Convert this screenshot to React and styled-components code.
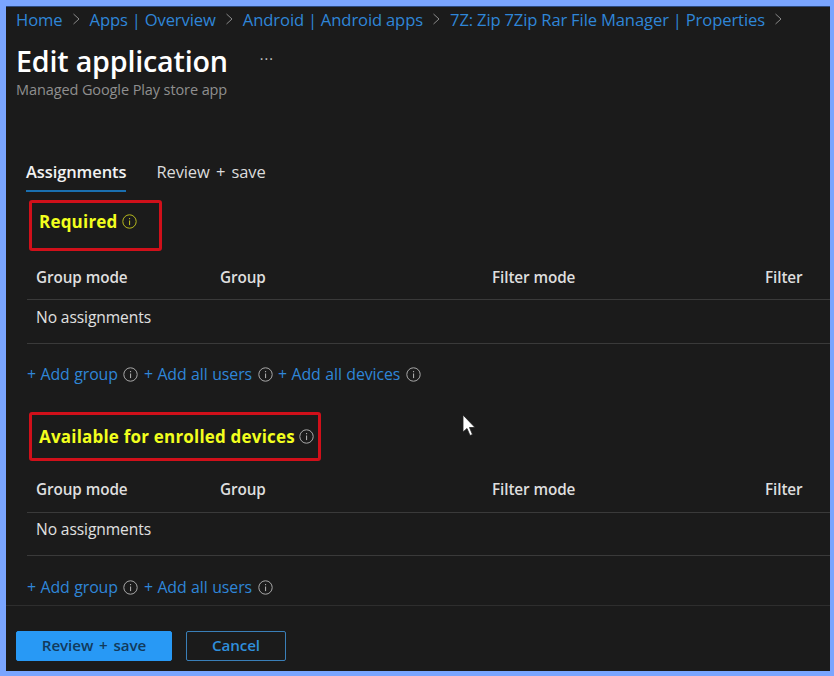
import React from "react";
import styled, { createGlobalStyle } from "styled-components";

const Global = createGlobalStyle`
  html, body { margin: 0; padding: 0; background: #7aa5ff; }
  body { font-family: "Open Sans", "Noto Sans", "Liberation Sans", sans-serif; }
`;

const Frame = styled.div`
  width: 834px; height: 676px; box-sizing: border-box;
  padding: 6px 4px 5px 6px; background: #7aa5ff; overflow: hidden;
`;
const Panel = styled.main`
  position: relative; height: 100%; box-sizing: border-box;
  background: #1b1b1b; display: flex; flex-direction: column;
  border-top: 1px solid #2b4a80;
`;
const Breadcrumbs = styled.nav`
  display: flex; align-items: center; height: 24px; padding: 0 0 2px 10px; gap: 9px;
  font-size: 16.6px; color: #2f86d8; white-space: nowrap;
`;
const Crumb = styled.span`letter-spacing: -0.1px; word-spacing: -0.3px;`;
const TitleRow = styled.div`
  display: flex; align-items: center; gap: 32px; padding: 8px 0 0 10px; height: 40px;
`;
const Title = styled.h1`
  margin: 0; font-size: 28.7px; font-weight: 600; color: #fff; letter-spacing: -0.2px; line-height: 40px;
`;
const More = styled.span`color: #c8c8c8; font-size: 14px; letter-spacing: 1px; line-height: 14px; margin-bottom: 4px;`;
const Subtitle = styled.div`
  padding: 0 0 0 10px; margin-top: -1px; font-size: 14.5px; line-height: 20px; color: #8f8f8f; letter-spacing: -0.1px;
`;
const Tabs = styled.div`
  display: flex; gap: 30px; margin: 56px 0 0 20px; height: 37px;
`;
const Tab = styled.div`
  font-size: 16.5px; line-height: 24px; padding-top: 4px; height: 30px; letter-spacing: -0.1px; word-spacing: 2px;
  color: ${p => (p.$active ? "#f2f2f2" : "#dcdcdc")};
  font-weight: ${p => (p.$active ? 600 : 400)};
  ${p => p.$active && "border-bottom: 2px solid #1a6fb0;"}
`;
const Marked = styled.div`
  align-self: flex-start; box-sizing: border-box; display: flex; align-items: center; gap: 4px;
  height: ${p => p.$h}px; width: ${p => p.$w}px; margin: ${p => p.$m};
  padding: 0 0 ${p => p.$pb}px 7px; border: 3px solid #d0101a; border-radius: 3px;
`;
const Heading = styled.h2`
  margin: 0; font-size: 17px; font-weight: 700; color: #f2ff1e; line-height: 20px; letter-spacing: 0.2px; white-space: nowrap;
`;
const Row = styled.div`
  display: grid; grid-template-columns: 184px 272px 273px 1fr; margin-left: 21px;
  align-items: center; padding: ${p => p.$pad}; box-sizing: border-box;
  height: ${p => p.$h}px; border-bottom: 1px solid #3a3a3a;
  font-size: 15.6px; color: #e0e0e0; letter-spacing: -0.1px;
`;
const Head = styled.span`font-weight: 600; font-size: 15.3px; color: #dedede; white-space: nowrap;`;
const Links = styled.div`
  display: flex; align-items: center; gap: 5.5px; margin: ${p => p.$m}; padding-left: 21px; height: 22px;
`;
const Link = styled.span`font-size: 15.9px; word-spacing: 0.5px; color: #2f86d8; letter-spacing: -0.1px; white-space: nowrap;`;
const Footer = styled.footer`
  margin-top: auto; height: 66px; box-sizing: border-box; border-top: 1px solid #2e2e2e;
  display: flex; gap: 14px; padding: 25px 0 0 10px;
`;
const Button = styled.button`
  height: 30px; box-sizing: border-box; border-radius: 2px; font-family: inherit; font-size: 15.2px; font-weight: 600;
  width: ${p => p.$w}px; padding: 0 0 3px; letter-spacing: -0.1px; word-spacing: 2px;
  background: ${p => (p.$primary ? "#2899f5" : "transparent")};
  color: ${p => (p.$primary ? "#123a5c" : "#2f8fdc")};
  border: 1px solid ${p => (p.$primary ? "#2899f5" : "#3a7fb8")};
`;
const Pointer = styled.svg`position: absolute; left: 456px; top: 407px;`;

const Info = ({ color = "#a8a8a8" }) => (
  <svg width="15" height="15" viewBox="0 0 15 15" fill="none" style={{ flex: "none" }}>
    <circle cx="7.5" cy="7.5" r="6.7" stroke={color} strokeWidth="1" />
    <rect x="7" y="6.5" width="1.1" height="4.6" fill={color} />
    <rect x="7" y="4" width="1.1" height="1.2" fill={color} />
  </svg>
);

const Chevron = () => (
  <svg width="9" height="12" viewBox="0 0 9 12" fill="none" style={{ flex: "none" }}>
    <path d="M1.5 1 L7 6 L1.5 11" stroke="#8a8a8a" strokeWidth="1" />
  </svg>
);

const crumbs = ["Home", "Apps | Overview", "Android | Android apps", "7Z: Zip 7Zip Rar File Manager | Properties"];

const Table = ({ headH, rowH }) => (
  <>
    <Row $h={headH} $pad="4px 0 0 9px">
      <Head>Group mode</Head><Head>Group</Head><Head>Filter mode</Head><Head>Filter</Head>
    </Row>
    <Row $h={rowH} $pad="0 0 10px 9px"><span>No assignments</span></Row>
  </>
);

export default function App() {
  return (
    <Frame>
      <Global />
      <Panel>
        <Breadcrumbs>
          {crumbs.map(c => (
            <React.Fragment key={c}>
              <Crumb>{c}</Crumb>
              <Chevron />
            </React.Fragment>
          ))}
        </Breadcrumbs>
        <TitleRow>
          <Title>Edit application</Title>
          <More>···</More>
        </TitleRow>
        <Subtitle>Managed Google Play store app</Subtitle>
        <Tabs>
          <Tab $active>Assignments</Tab>
          <Tab>Review + save</Tab>
        </Tabs>
        <Marked $w={133} $h={51} $m="7px 0 0 23px" $pb={8}>
          <Heading>Required</Heading>
          <Info color="#b5b81e" />
        </Marked>
        <Table headH={49} rowH={44} />
        <Links $m="19px 0 0 0">
          <Link>+ Add group</Link><Info />
          <Link>+ Add all users</Link><Info />
          <Link>+ Add all devices</Link><Info />
        </Links>
        <Marked $w={292} $h={49} $m="27px 0 0 23px" $pb={0}>
          <Heading>Available for enrolled devices</Heading>
          <Info />
        </Marked>
        <Table headH={52} rowH={43} />
        <Links $m="20px 0 0 0">
          <Link>+ Add group</Link><Info />
          <Link>+ Add all users</Link><Info />
        </Links>
        <Footer>
          <Button $primary $w={156}>Review + save</Button>
          <Button $w={100}>Cancel</Button>
        </Footer>
        <Pointer width="14" height="24" viewBox="0 0 14 24">
          <path d="M1 1 L1 18 L5 14.5 L8 21.5 L10.5 20.5 L7.5 13.5 L13 13.5 Z" fill="#fff" stroke="#222" strokeWidth="0.8" />
        </Pointer>
      </Panel>
    </Frame>
  );
}
